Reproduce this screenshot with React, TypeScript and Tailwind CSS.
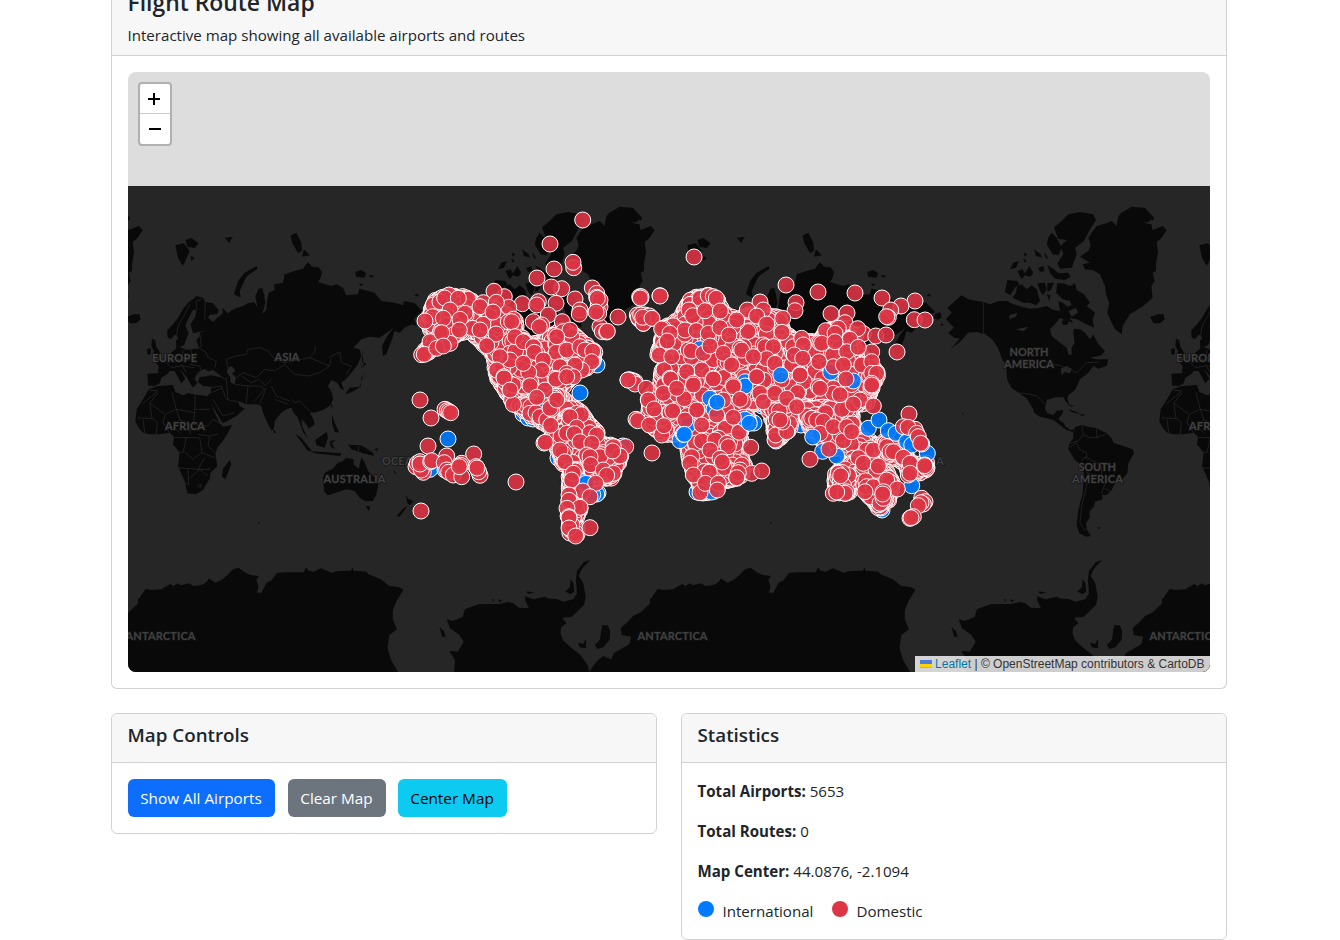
import type { ReactNode } from "react";

type Pt = [number, number];

/* ---------- land outlines ---------- */

const EURASIA =
  "M118,432 135,415 150,395 165,370 180,350 195,340 205,330 225,335 232,348 255,352 272,372 268,385 245,386 240,395 255,408 268,395 285,382 283,365 290,372 298,382 320,368 345,360 360,352 378,348 388,362 382,330 392,308 403,305 408,325 412,350 403,384 415,372 417,345 422,320 440,312 438,295 465,290 470,265 500,255 525,248 540,228 552,242 572,244 582,258 578,275 570,288 610,300 625,295 645,305 655,328 690,325 694,308 740,320 760,345 782,348 800,350 825,358 828,345 860,352 886,378 870,385 858,400 866,420 852,415 830,425 815,440 800,435 790,465 775,505 765,510 762,480 778,450 797,425 775,440 755,455 725,452 700,460 676,486 695,490 700,510 690,535 670,560 655,578 640,590 648,612 638,608 628,590 610,582 600,600 612,620 615,640 605,660 585,672 560,680 545,678 556,700 560,715 542,728 535,715 520,700 522,720 540,758 525,738 515,710 508,692 498,682 490,665 475,670 460,680 440,705 438,725 432,735 420,715 405,680 400,660 385,655 355,655 330,645 335,660 350,668 325,690 285,712 280,705 265,680 245,645 240,628 248,622 250,602 225,600 210,588 215,574 250,568 285,575 262,558 240,566 225,556 205,566 200,578 208,592 195,605 185,590 178,575 165,560 155,548 172,578 160,592 148,570 140,555 125,555 118,565 100,575 95,592 80,600 60,598 58,563 90,562 92,540 80,528 105,520 120,510 135,495 145,488 144,462 156,460 155,482 175,492 195,490 212,485 205,462 215,450 214,440 236,432 195,442 188,415 202,392 205,372 195,372 180,400 172,420 182,442 168,478 155,482 148,450 140,446 128,460 118,452Z";
const CASPIAN =
  "M300,545 312,540 322,555 312,562 324,575 320,595 308,590 306,572 296,558ZM205,562 230,548 240,556 258,552 265,564 240,568Z";
const AFRICA =
  "M88,600 135,597 142,618 165,628 180,622 205,626 240,630 246,645 262,685 275,710 285,722 312,717 300,740 285,765 268,785 262,805 268,840 248,860 245,878 225,912 205,925 178,922 170,885 150,840 155,800 135,775 138,752 125,740 95,745 65,745 45,740 30,722 22,705 26,670 45,640 62,610Z";
const AUSTRALIA =
  "M585,875 590,860 612,850 630,830 645,825 655,815 678,820 676,835 692,848 700,815 708,825 720,855 740,875 752,890 745,925 735,945 712,946 695,935 680,915 655,910 620,922 598,928 588,915Z";
const OLD_WORLD_ISLANDS =
  "M142,178 168,172 185,195 165,240 150,215ZM172,162 190,156 212,172 200,186 178,182ZM188,210 200,216 190,225ZM290,155 315,152 303,170ZM488,148 505,140 520,170 522,195 510,200 492,170ZM522,212 528,190 545,208ZM386,240 388,248 355,272 335,315 338,335 318,325 330,285 350,260ZM682,258 700,252 714,262 710,275 684,272ZM720,266 738,270 730,276ZM694,292 708,296 696,300ZM858,328 870,324 872,332ZM0,392 20,384 36,392 28,408 8,412 0,404ZM72,458 82,462 84,480 96,500 92,512 74,512 78,495 70,480ZM56,490 68,486 68,504 58,506ZM305,822 310,835 292,880 282,872 284,850ZM435,728 445,740 438,742ZM502,744 520,755 552,796 540,795ZM548,796 640,802 636,810 560,802ZM562,762 596,738 600,755 590,785 566,778ZM605,765 625,762 612,770 620,790 608,782ZM612,685 620,710 634,740 620,738 612,710ZM660,776 700,778 735,800 738,810 700,800 670,790ZM740,790 752,786 745,796ZM652,625 665,605 695,602 705,570 712,556 700,575 698,602 672,618ZM700,545 716,535 702,528ZM702,492 708,545 702,540ZM834,928 842,940 856,945 846,958 838,952ZM838,960 828,975 815,992 806,990 825,968ZM714,960 728,962 722,975ZM390,1007 396,1010 392,1014ZM795,852 808,864 800,862ZM610,650 614,660 610,668ZM0,90 6,98 0,106Z";
const OLD_BORDERS =
  "M135,470 145,455 150,420 165,395 185,355 M205,372 205,345 222,340 M232,348 230,400 M215,440 220,480 205,490 M212,485 235,500 240,515 265,525 260,545 M165,492 160,520 135,520 M105,520 125,540 M128,545 160,540 200,545 M188,492 195,520 160,525 M185,535 215,540 220,555 M160,535 175,560 M262,558 290,580 300,575 M300,545 295,520 325,510 355,505 360,490 395,485 420,495 440,520 470,530 M470,535 440,555 410,550 385,575 345,560 325,575 M470,530 520,520 545,515 605,540 575,560 540,570 500,565 470,535 M605,540 610,510 635,498 640,530 670,540 655,565 M340,570 370,590 395,580 412,600 430,580 M322,595 360,600 355,650 M360,600 395,600 410,610 375,650 M415,605 395,655 M430,600 445,630 485,645 M440,640 480,655 M490,640 500,650 515,645 545,675 M545,515 560,500 562,482 M250,605 280,600 295,640 330,648 M295,580 300,640 M255,640 285,690 320,680 M250,620 285,605 M62,612 90,615 60,640 40,655 M65,652 72,698 30,695 M90,620 65,652 112,685 145,670 132,620 M145,670 200,680 200,670 202,628 M200,670 246,670 M112,685 105,710 M145,670 155,700 140,725 160,745 M200,680 195,715 240,720 M155,700 190,720 185,745 M45,700 50,740 M72,698 88,708 85,745 M105,710 125,740 M210,745 245,750 270,745 M240,720 255,700 280,715 M245,750 240,780 262,800 M140,755 175,755 165,800 155,798 M165,755 215,755 222,800 195,820 170,798 M150,845 210,850 230,815 M180,850 182,895 170,890 M182,880 215,850 240,870 M222,800 260,815 M210,850 248,850 M210,898 220,895 218,905 212,903Z M692,780 692,803";

const N_AMERICA =
  "M95,328 115,340 140,345 160,348 180,355 205,345 230,345 250,355 275,362 300,368 330,365 350,360 370,372 390,375 385,345 398,350 412,362 425,358 420,345 398,340 378,320 382,292 400,292 420,300 435,292 440,312 462,325 480,350 470,360 495,380 488,400 492,425 470,415 440,400 418,396 430,410 410,405 390,395 375,415 360,430 365,450 390,470 410,485 415,505 425,508 425,485 434,470 430,440 432,428 450,430 465,440 480,460 490,445 505,475 525,495 515,508 480,515 500,520 535,520 530,540 505,548 490,540 475,560 450,580 435,612 415,627 412,637 418,657 408,647 400,634 375,634 350,642 345,667 352,682 370,687 380,674 400,672 398,682 385,700 402,712 405,720 420,732 432,730 428,738 410,732 390,717 370,702 350,697 330,692 312,680 310,670 290,637 275,627 262,617 245,607 232,582 230,560 228,535 216,520 210,500 200,480 185,460 165,445 140,438 115,440 90,468 62,488 90,458 72,455 55,440 72,425 48,400 65,380 52,365 75,345Z";
const S_AMERICA =
  "M430,737 435,724 455,717 480,724 500,727 530,742 545,757 550,770 580,780 608,790 612,802 595,832 592,862 570,887 555,892 545,912 530,927 515,927 518,940 495,947 492,962 478,977 480,992 468,1012 470,1030 482,1050 468,1052 448,1042 440,1017 445,972 458,922 462,872 460,842 435,822 415,790 418,772 430,757Z";
const GREENLAND =
  "M605,62 645,66 672,95 655,108 640,110 664,115 668,132 698,120 710,132 695,155 680,168 684,200 678,235 678,255 668,260 674,285 664,300 668,335 640,360 600,385 590,400 578,420 575,445 555,430 540,400 532,380 538,352 528,325 525,300 510,265 490,253 465,250 458,235 480,230 450,212 475,195 482,178 475,155 500,120 530,112 545,105 560,120 565,90 575,80Z";
const ARCTIC =
  "M415,85 450,78 490,85 498,102 480,130 462,165 435,185 440,205 425,245 390,248 382,232 400,205 392,180 410,162 385,158 372,125 400,100ZM365,140 380,155 395,185 385,208 368,205 350,175 355,155ZM312,190 332,205 335,215 318,210ZM342,198 354,215 348,218ZM282,200 292,204 284,212ZM240,250 250,230 267,225 258,245ZM280,218 290,224 284,230ZM262,255 278,250 285,262 298,240 310,262 300,272 285,268 275,280ZM325,245 340,240 344,255 330,258ZM352,238 372,250 385,262 415,260 422,272 405,282 375,278 360,262ZM232,282 262,285 268,295 255,305 240,328 225,318ZM262,300 275,295 290,310 305,298 320,310 330,345 318,358 300,350 280,350 248,335 258,320ZM322,292 345,290 350,310 340,328 330,315ZM352,292 372,290 362,312 352,318ZM350,325 362,328 358,345ZM395,405 412,400 415,414 400,418ZM15,385 30,378 36,392 24,402 12,395ZM32,412 42,416 34,420ZM660,392 680,388 700,384 704,400 690,412 672,412ZM415,670 440,678 450,685 425,678ZM450,684 468,686 455,690ZM96,680 102,682 98,685ZM500,1024 514,1025 506,1029ZM412,655 432,660 425,662Z";
const LAKES =
  "M238,388 262,380 258,392 238,400ZM258,430 295,422 280,436ZM392,548 410,540 425,548 420,562 405,558 395,568ZM415,375 438,365 444,380 425,392Z";
const NEW_BORDERS =
  "M160,348 160,442 M160,442 185,460 205,490 M358,532 395,540 440,560 470,530 505,528 M262,620 300,625 320,630 345,655 M455,717 460,745 480,755 500,755 530,745 M500,727 500,755 M460,745 445,765 418,772 M418,785 440,770 448,790 470,800 470,812 455,822 M465,812 500,830 515,845 515,870 535,880 520,905 540,915 M468,840 470,860 500,870 M462,872 470,900 455,960 450,1010 465,1035 M520,905 515,925";

const ANTARCTICA =
  "M770,396 750,360 740,325 745,285 767,268 755,240 755,210 767,180 785,150 775,142 745,138 720,118 685,103 680,95 643,92 640,82 636,92 600,93 580,98 550,85 530,95 515,92 508,82 500,97 450,97 425,98 410,120 395,128 380,158 368,158 372,140 366,120 373,108 350,105 335,98 315,83 300,88 270,118 250,128 230,115 225,125 210,135 185,138 175,130 150,136 142,130 130,138 120,132 95,148 65,150 50,147 28,180 28,192 0,218 -20,228 -35,245 -55,265 -52,285 -25,290 -30,312 -75,340 -82,358 -105,348 -125,365 -145,396ZM1315,396 1310,375 1290,345 1265,325 1240,300 1233,280 1235,262 1250,250 1238,233 1265,230 1300,195 1305,170 1298,130 1285,108 1295,85 1318,60 1300,66 1280,92 1277,120 1280,160 1270,178 1240,185 1225,178 1195,175 1190,170 1155,178 1133,168 1132,180 1143,205 1115,203 1098,190 1085,186 1060,192 1000,193 960,208 955,230 925,243 908,237 918,265 945,285 957,305 940,335 916,332 932,360 930,396ZM1262,118 1270,130 1272,155 1262,163 1247,155 1260,142ZM1137,154 1160,158 1140,162ZM1037,177 1046,180 1040,183ZM1055,178 1068,182 1058,186ZM888,262 900,272 906,290 896,290ZM1352,256 1368,256 1375,275 1373,300 1355,322 1338,327 1331,315 1345,300ZM1283,308 1298,312 1306,296 1306,325 1288,322Z";

/* ---------- airport markers ---------- */

const MASSES: { poly: Pt[]; n: number }[] = [
  { n: 430, poly: [[436,301],[449,296],[466,298],[480,308],[494,308],[508,316],[516,322],[514,333],[524,341],[530,345],[540,344],[550,338],[560,331],[575,336],[588,348],[594,353],[593,361],[585,368],[575,372],[568,380],[557,390],[553,396],[540,400],[530,398],[515,402],[505,388],[497,378],[496,365],[493,352],[482,342],[472,330],[455,334],[440,345],[424,354],[434,340],[434,333],[427,322],[433,308]] },
  { n: 60, poly: [[511,400],[527,412],[537,418],[548,425],[560,436],[570,426],[584,420],[580,412],[566,402],[556,396],[545,402],[530,404]] },
  { n: 200, poly: [[553,428],[570,415],[583,418],[597,432],[592,442],[613,447],[621,454],[617,466],[611,477],[596,478],[590,470],[575,468],[563,463],[559,450],[552,440]] },
  { n: 55, poly: [[570,470],[576,470],[580,490],[579,508],[575,520],[577,534],[571,532],[569,515],[570,495]] },
  { n: 700, poly: [[692,299],[710,296],[717,300],[721,312],[737,321],[748,316],[760,315],[780,318],[782,332],[797,342],[820,342],[826,332],[840,327],[855,336],[850,346],[863,358],[874,368],[877,375],[871,388],[866,402],[853,405],[827,411],[800,410],[783,416],[770,408],[760,402],[745,405],[748,420],[735,428],[715,430],[690,430],[675,434],[662,433],[650,425],[650,408],[649,398],[662,386],[662,373],[668,362],[659,354],[661,342],[664,330],[682,318]] },
  { n: 180, poly: [[686,432],[735,424],[741,432],[737,442],[733,450],[744,464],[742,475],[720,483],[714,491],[702,492],[697,480],[691,464]] },
  { n: 50, poly: [[768,405],[795,405],[788,430],[776,440],[774,422]] },
  { n: 180, poly: [[804,408],[850,408],[853,425],[860,438],[878,447],[890,455],[878,463],[850,463],[847,450],[829,446],[812,430]] },
  { n: 160, poly: [[852,463],[878,461],[892,482],[889,498],[880,508],[866,492],[861,478],[850,485],[848,493],[836,492],[836,474]] },
  { n: 40, poly: [[885,442],[900,452],[915,465],[926,464],[926,470],[910,474],[905,462],[888,455]] },
];

const UNDER_BLUE: Pt[] = [[597,365],[639,319],[598,493],[523,414],[528,418],[533,419],[586,420],[558,458],[623,446],[703,493],[697,492],[776,441],[788,431],[801,425],[882,510],[754,423],[741,440],[762,406]];
const NW: Pt[] = [[548,90],[450,162],[521,233],[519,217],[462,237],[411,264],[485,296],[454,291],[577,294],[313,320],[282,304],[367,341],[326,352],[525,327],[590,310],[595,345],[592,365],[590,322],[600,410],[607,425],[620,426],[654,381],[722,325],[719,320],[780,317],[712,375],[722,382],[735,375],[730,400],[727,380],[753,385],[790,415],[415,335],[410,345],[468,340],[540,360],[538,372],[400,395],[445,375],[487,395],[340,388],[147,315],[205,328],[250,338],[100,345],[120,335],[134,324],[175,325],[289,337],[240,350],[279,366],[325,395],[98,380],[75,393],[150,360],[195,370],[180,388],[217,415],[130,385],[178,420],[120,430],[150,460],[90,455],[125,428],[65,494],[73,493],[110,475],[130,468],[288,432],[240,420],[260,467],[335,395],[425,405],[418,410],[345,440],[370,455],[400,470],[490,425],[515,440],[510,420],[470,440],[403,487],[500,480],[540,470],[555,480],[578,484],[600,350],[596,370],[600,330],[592,325],[588,366],[622,424],[575,515],[545,540],[430,510],[425,540],[330,510],[300,500],[386,547],[480,530],[525,525],[500,550],[290,540],[312,560],[465,565],[520,560],[370,520]];
const SW_BLUE: Pt[] = [[540,69],[144,207],[90,298],[135,300],[428,125],[545,335],[590,372],[578,374],[558,340]];
const SW: Pt[] = [[60,90],[93,144],[135,118],[142,122],[147,125],[152,128],[84,228],[48,290],[52,280],[70,307],[64,300],[60,275],[60,282],[92,275],[95,272],[140,258],[133,278],[140,300],[146,307],[160,315],[185,320],[185,280],[182,286],[178,290],[221,252],[240,316],[236,305],[228,290],[231,294],[348,336],[63,423],[432,219],[436,217],[340,103],[390,130],[408,128],[420,140],[440,150],[455,118],[452,166],[450,115],[340,45],[312,24],[330,60],[390,47],[435,60],[410,82],[468,28],[500,20],[470,90],[530,130],[544,134],[510,140],[530,172],[570,188],[590,195],[500,190],[523,191],[540,215],[575,220],[490,250],[480,240],[495,275],[677,230],[600,260],[560,255],[570,260],[572,284],[640,230],[660,258],[638,243],[610,300],[640,310],[620,316],[587,340],[520,310],[515,330],[548,363],[570,380],[507,375],[507,391],[540,412],[501,415],[507,440],[507,443],[507,474],[527,498],[570,473]];
const NE_BLUE: Pt[] = [[240,356],[375,455],[632,427]];
const NE: Pt[] = [[222,81],[498,165],[594,186],[705,189],[786,204],[885,213],[843,228],[812,240],[805,262],[800,260],[883,269],[915,270],[528,218],[525,242],[633,251],[681,249],[675,278],[617,302],[655,295],[645,310],[730,311],[713,296],[767,318],[798,315],[831,366],[690,328],[755,366],[680,365],[420,216],[382,240],[430,240],[350,270],[410,258],[440,282],[488,265],[486,307],[120,198],[63,200],[61,204],[55,262],[62,255],[75,262],[88,258],[70,280],[68,262],[96,265],[125,297],[240,205],[265,197],[280,200],[289,205],[207,240],[218,257],[255,242],[301,243],[195,300],[229,302],[265,310],[300,293],[327,315],[150,310],[142,333],[118,375],[155,380],[205,360],[214,363],[250,370],[270,348],[310,370],[360,355],[365,360],[430,345],[436,350],[460,350],[440,386],[400,380],[335,405],[245,420],[280,445],[200,425],[150,445],[152,447],[30,450],[45,455],[38,452],[24,450],[220,460],[340,465],[410,440],[465,400],[520,350],[545,325],[550,345],[523,375],[548,385],[605,340],[645,335],[640,410],[670,405],[597,395],[725,405],[715,352],[755,395],[755,430],[770,430],[540,432],[595,470],[640,475],[755,460],[755,468]];
const NE_TOP: Pt[] = [[482,435],[700,453]];
const SE_BLUE: Pt[] = [[375,48],[270,85],[282,118],[290,98],[205,165],[375,148],[388,160],[180,212],[190,193],[275,366],[608,244],[650,258],[745,175],[777,150],[805,182],[828,190],[860,215],[875,225],[922,250],[875,347]];
const SE: Pt[] = [[30,30],[38,34],[45,42],[24,30],[48,148],[53,152],[96,249],[78,55],[85,90],[130,70],[170,55],[220,45],[280,27],[340,50],[102,117],[158,123],[88,165],[125,195],[132,167],[195,150],[230,120],[290,135],[340,142],[370,95],[360,88],[310,90],[410,20],[420,70],[430,95],[465,70],[500,85],[540,15],[530,110],[245,165],[245,213],[285,210],[270,240],[320,220],[325,230],[300,265],[307,276],[215,260],[210,280],[220,315],[240,368],[268,307],[256,340],[295,340],[292,360],[392,232],[365,285],[360,300],[350,325],[395,310],[425,303],[355,308],[350,323],[465,210],[467,195],[500,185],[488,156],[480,150],[570,268],[575,145],[590,150],[610,154],[600,190],[627,238],[670,212],[640,170],[680,170],[695,185],[640,70],[660,74],[720,90],[700,102],[760,108],[755,45],[600,55],[740,240],[715,263],[730,280],[760,240],[800,230],[775,288],[810,245],[820,245],[850,262],[870,280],[865,315],[870,310],[920,295],[915,285],[917,292],[914,287],[867,132],[850,170],[885,178],[864,172],[890,190],[895,200],[905,222],[902,220],[655,310],[662,317],[640,370],[675,370],[650,366],[740,350],[760,350],[800,330],[832,357],[735,365],[780,400],[790,385],[790,365],[788,372],[905,385],[915,395],[910,402],[903,398],[895,407],[870,445],[880,440],[873,443]];
const SE_TOP: Pt[] = [[578,201],[193,193],[291,97]];

function makeRandom(seed: number) {
  let s = seed;
  return () => {
    s = (s * 1664525 + 1013904223) % 4294967296;
    return s / 4294967296;
  };
}

function inside([x, y]: Pt, poly: Pt[]) {
  let hit = false;
  for (let i = 0, j = poly.length - 1; i < poly.length; j = i++) {
    const [xi, yi] = poly[i];
    const [xj, yj] = poly[j];
    if (yi > y !== yj > y && x < ((xj - xi) * (y - yi)) / (yj - yi) + xi) hit = !hit;
  }
  return hit;
}

function scatter(): Pt[] {
  const rnd = makeRandom(77);
  const out: Pt[] = [];
  for (const { poly, n } of MASSES) {
    poly.forEach(([x, y], i) => {
      const [nx, ny] = poly[(i + 1) % poly.length];
      const steps = Math.max(1, Math.round(Math.hypot(nx - x, ny - y) / 1.8));
      for (let k = 0; k < steps; k++) {
        const t = k / steps;
        out.push([x + (nx - x) * t + rnd() * 2.4 - 1.2, y + (ny - y) * t + rnd() * 2.4 - 1.2]);
      }
    });
    const xs = poly.map((p) => p[0]);
    const ys = poly.map((p) => p[1]);
    const [x0, x1, y0, y1] = [Math.min(...xs), Math.max(...xs), Math.min(...ys), Math.max(...ys)];
    let placed = 0;
    while (placed < n) {
      const p: Pt = [x0 + rnd() * (x1 - x0), y0 + rnd() * (y1 - y0)];
      if (inside(p, poly)) {
        out.push(p);
        placed++;
      }
    }
  }
  return out;
}

const place = (pts: Pt[], ox: number, oy: number): Pt[] => pts.map(([x, y]) => [ox + x / 3, oy + y / 3]);

const RED = "#dc3545";
const BLUE = "#007bff";

function Markers({ pts, color }: { pts: Pt[]; color: string }) {
  return (
    <g fill={color} fillOpacity={0.9} stroke="#fff" strokeWidth={1}>
      {pts.map(([x, y], i) => (
        <circle key={i} cx={x.toFixed(1)} cy={y.toFixed(1)} r={8} />
      ))}
    </g>
  );
}

const LABELS: [string, number, number, number][] = [
  ["EUROPE", 152, 361.5, 45],
  ["ASIA", 274.5, 361, 25],
  ["AFRICA", 165, 429.5, 40],
  ["AUSTRALIA", 323.5, 483, 62],
  ["OCEANIA", 382, 464.5, 50],
  ["ANTARCTICA", 637.5, 640, 70],
  ["NORTH", 1009.5, 355.5, 39],
  ["AMERICA", 1004, 367.5, 50],
  ["SOUTH", 1078.5, 470.5, 37.5],
  ["AMERICA", 1072, 482.5, 51],
];

function WorldMap() {
  return (
    <svg viewBox="128 72 1082 600" className="block h-[600px] w-full">
      <rect x={128} y={186} width={1082} height={486} fill="#262626" />
      {[0, 512, 1024].map((dx) => (
        <g key={dx}>
          <g transform={`translate(${128 + dx} 186) scale(.33333)`}>
            <path d={EURASIA + AFRICA + AUSTRALIA + OLD_WORLD_ISLANDS} fill="#090909" />
            <path d={CASPIAN} fill="#262626" />
            <path d={OLD_BORDERS} fill="none" stroke="#262626" strokeWidth={2.4} strokeLinejoin="round" />
          </g>
          <g transform={`translate(${930 - dx} 186) scale(.33333)`}>
            <path d={N_AMERICA + S_AMERICA + GREENLAND + ARCTIC} fill="#090909" />
            <path d={LAKES} fill="#262626" />
            <path d={NEW_BORDERS} fill="none" stroke="#262626" strokeWidth={2.4} strokeLinejoin="round" />
          </g>
          <path d={ANTARCTICA} fill="#090909" transform={`translate(${128 + dx} 540) scale(.35075 .33333)`} />
        </g>
      ))}
      <g fill="#414141" stroke="#151515" strokeWidth={1.4} paintOrder="stroke" className="font-['Lato',sans-serif] text-[11px] font-bold">
        {[-1024, -512, 0, 512, 1024].map((dx) =>
          LABELS.map(([t, x, y, w], i) => {
            const px = x + dx;
            if (px > 1210 || px + w < 128) return null;
            return (
              <text key={`${dx}-${i}`} x={px} y={y} textLength={w}>
                {t}
              </text>
            );
          })
        )}
      </g>
      <Markers color={BLUE} pts={UNDER_BLUE} />
      <Markers color={RED} pts={scatter()} />
      <Markers color={BLUE} pts={[...place(SW_BLUE, 400, 370), ...place(NE_BLUE, 620, 230), ...place(SE_BLUE, 620, 370)]} />
      <Markers
        color={RED}
        pts={[...place(NW, 400, 190), ...place(SW, 400, 370), ...place(NE, 620, 230), ...place(SE, 620, 370)]}
      />
      <Markers color={BLUE} pts={[...place(NE_TOP, 620, 230), ...place(SE_TOP, 620, 370)]} />
      <Markers color={RED} pts={[[846, 379]]} />
    </svg>
  );
}

function Card({ title, children }: { title: string; children: ReactNode }) {
  return (
    <section className="flex-1 rounded-md border border-[#d2d2d2] bg-white">
      <header className="h-[49px] rounded-t-md border-b border-[#d2d2d2] bg-[#f7f7f7] px-[15.5px] pt-2">
        <h5 className="text-[18.8px] leading-[26px] font-semibold">{title}</h5>
      </header>
      <div className="p-4 pl-[15.5px]">{children}</div>
    </section>
  );
}

function Stat({ label, value }: { label: string; value: string }) {
  return (
    <p className="mb-4 leading-6">
      <strong className="font-bold">{label}</strong> {value}
    </p>
  );
}

export default function App() {
  return (
    <div className="h-[940px] overflow-hidden bg-white px-[111px] font-['Open_Sans','Noto_Sans',sans-serif] text-[15.1px] text-[#212529]">
      <div className="mr-[2px]">
        <section className="rounded-b-md border border-t-0 border-[#d2d2d2]">
          <header className="flex h-14 flex-col justify-end border-b border-[#d2d2d2] bg-[#f7f7f7] px-[15.5px] pb-2">
            <h4 className="mb-[6px] shrink-0 text-[22.9px] leading-[29px] font-semibold">Flight Route Map</h4>
            <p className="shrink-0 leading-6">Interactive map showing all available airports and routes</p>
          </header>
          <div className="p-4">
            <div className="relative overflow-hidden rounded-lg bg-[#ddd]">
              <WorldMap />
              <div className="absolute top-[10px] left-[10px] w-[34px] overflow-hidden rounded-[4px] border-2 border-[#b0b0b0] bg-white text-black">
                <button className="flex h-[30px] w-full items-center justify-center border-b border-[#ccc]" aria-label="Zoom in">
                  <svg viewBox="0 0 12 12" className="mr-[2px] size-3 stroke-black stroke-2">
                    <path d="M0 6H12M6 0V12" />
                  </svg>
                </button>
                <button className="flex h-[30px] w-full items-center justify-center" aria-label="Zoom out">
                  <svg viewBox="0 0 12 12" className="size-3 stroke-black stroke-2">
                    <path d="M0 6H12" />
                  </svg>
                </button>
              </div>
              <div className="absolute right-0 bottom-0 flex h-4 items-center bg-white/80 pr-[5.5px] pl-[5px] font-['Liberation_Sans',Arial,sans-serif] text-[12px] leading-4 whitespace-pre text-[#333]">
                <svg viewBox="0 0 12 8" className="mr-[3px] h-2 w-3">
                  <path fill="#4C7BE1" d="M0 0h12v4H0z" />
                  <path fill="#FFD500" d="M0 4h12v3H0z" />
                  <path fill="#E0BC00" d="M0 7h12v1H0z" />
                </svg>
                <span className="text-[#0078a8]">Leaflet</span> | © OpenStreetMap contributors &amp; CartoDB
              </div>
            </div>
          </div>
        </section>

        <div className="mt-6 flex items-start gap-6">
          <Card title="Map Controls">
            <div className="flex">
              <button className="mr-[13px] h-[38px] w-[147px] rounded-md bg-[#0d6efd] text-[15.3px] text-white">Show All Airports</button>
              <button className="mr-3 h-[38px] w-[98px] rounded-md bg-[#6c757d] text-[15.3px] text-white">Clear Map</button>
              <button className="h-[38px] w-[109px] rounded-md bg-[#0dcaf0] text-[15.3px] text-black">Center Map</button>
            </div>
          </Card>
          <Card title="Statistics">
            <Stat label="Total Airports:" value="5653" />
            <Stat label="Total Routes:" value="0" />
            <Stat label="Map Center:" value="44.0876, -2.1094" />
            <div className="flex h-6 items-center pt-px">
              <span className="mb-[5px] size-4 rounded-full bg-[#007bff]" />
              <span className="ml-[9px] w-[109px]">International</span>
              <span className="mb-[5px] size-4 rounded-full bg-[#dc3545]" />
              <span className="ml-[9px]">Domestic</span>
            </div>
          </Card>
        </div>
      </div>
    </div>
  );
}
